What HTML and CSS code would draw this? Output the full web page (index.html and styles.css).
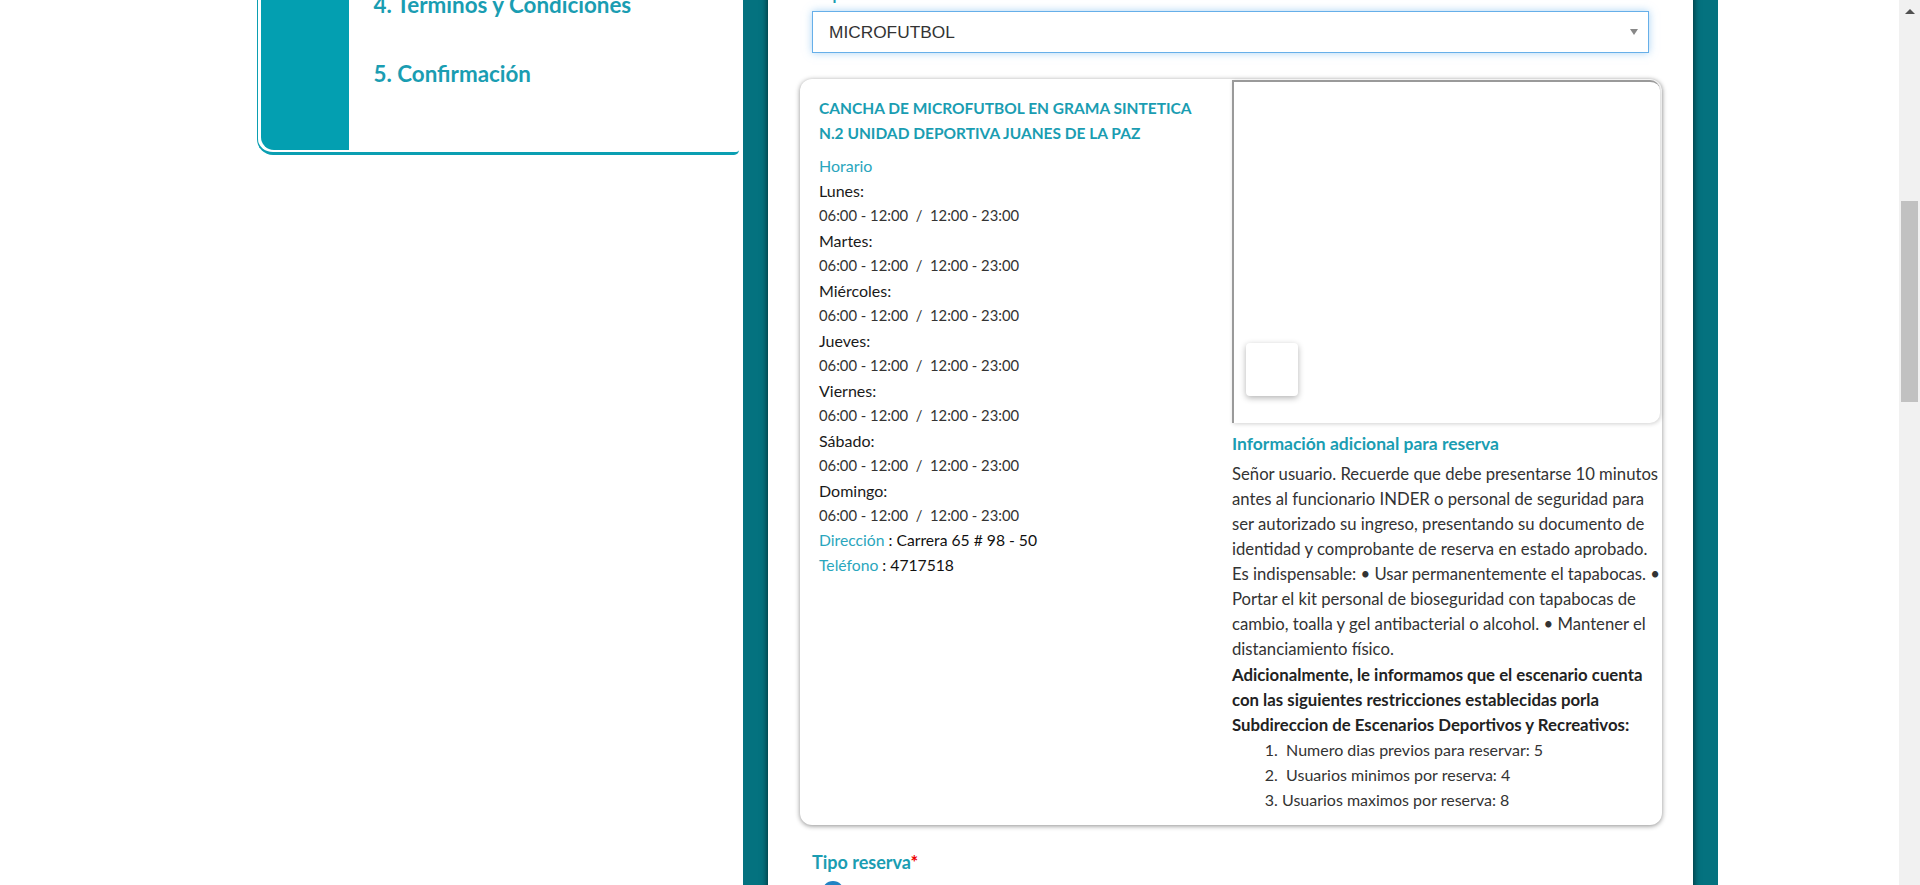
FILE: index.html
```html
<!DOCTYPE html>
<html lang="es">
<head>
<meta charset="utf-8">
<title>Reserva de escenarios</title>
<link rel="stylesheet" href="styles.css">
</head>
<body>
<div class="viewport">
  <div class="page">
    <div class="layout">
      <aside class="steps">
        <div class="steps-rail"></div>
        <ol class="steps-list">
          <li>4. Términos y Condiciones</li>
          <li>5. Confirmación</li>
        </ol>
      </aside>
      <main class="frame">
        <div class="panel">
          <div class="field">
            <label class="field-label">Deporte<span class="req">*</span></label>
            <div class="select">
              <span class="select-value">MICROFUTBOL</span>
              <span class="select-caret"></span>
            </div>
          </div>

          <section class="venue">
            <div class="venue-info">
              <h2 class="venue-title">CANCHA DE MICROFUTBOL EN GRAMA SINTETICA N.2 UNIDAD DEPORTIVA JUANES DE LA PAZ</h2>
              <div class="label">Horario</div>
              <div class="day">Lunes:</div>
              <div class="hours">06:00 - 12:00 &nbsp;/&nbsp; 12:00 - 23:00</div>
              <div class="day">Martes:</div>
              <div class="hours">06:00 - 12:00 &nbsp;/&nbsp; 12:00 - 23:00</div>
              <div class="day">Miércoles:</div>
              <div class="hours">06:00 - 12:00 &nbsp;/&nbsp; 12:00 - 23:00</div>
              <div class="day">Jueves:</div>
              <div class="hours">06:00 - 12:00 &nbsp;/&nbsp; 12:00 - 23:00</div>
              <div class="day">Viernes:</div>
              <div class="hours">06:00 - 12:00 &nbsp;/&nbsp; 12:00 - 23:00</div>
              <div class="day">Sábado:</div>
              <div class="hours">06:00 - 12:00 &nbsp;/&nbsp; 12:00 - 23:00</div>
              <div class="day">Domingo:</div>
              <div class="hours">06:00 - 12:00 &nbsp;/&nbsp; 12:00 - 23:00</div>
              <div class="kv"><span class="label">Dirección</span> : Carrera 65 # 98 - 50</div>
              <div class="kv"><span class="label">Teléfono</span> : 4717518</div>
            </div>

            <div class="venue-side">
              <div class="map">
                <div class="map-control"></div>
              </div>
              <h3 class="extra-title">Información adicional para reserva</h3>
              <p class="extra-text">Señor usuario. Recuerde que debe presentarse 10 minutos antes al funcionario INDER o personal de seguridad para ser autorizado su ingreso, presentando su documento de identidad y comprobante de reserva en estado aprobado. Es indispensable: • Usar permanentemente el tapabocas. • Portar el kit personal de bioseguridad con tapabocas de cambio, toalla y gel antibacterial o alcohol. • Mantener el distanciamiento físico.</p>
              <p class="extra-strong">Adicionalmente, le informamos que el escenario cuenta con las siguientes restricciones establecidas porla Subdireccion de Escenarios Deportivos y Recreativos:</p>
              <ol class="rules">
                <li>&nbsp;Numero dias previos para reservar: 5</li>
                <li>&nbsp;Usuarios minimos por reserva: 4</li>
                <li>Usuarios maximos por reserva: 8</li>
              </ol>
            </div>
          </section>

          <div class="field">
            <label class="field-label field-label-lg">Tipo reserva<span class="req">*</span></label>
            <div class="radio-row"><span class="radio"></span></div>
          </div>
        </div>
      </main>
    </div>
  </div>
  <div class="scrollbar">
    <div class="scroll-arrow"></div>
    <div class="scroll-thumb"></div>
  </div>
</div>
</body>
</html>
```

FILE: styles.css
```css
* { box-sizing: border-box; }

html, body {
  margin: 0;
  height: 100%;
  overflow: hidden;
  background: #fff;
}

body {
  font-family: "Lato", "Open Sans", sans-serif;
  font-size: 16px;
  color: #333;
}

.viewport {
  display: flex;
  height: 885px;
}

.page {
  flex: 1;
  overflow: hidden;
}

.layout {
  display: flex;
  align-items: flex-start;
  gap: 4px;
  margin-top: -40px;
  padding-left: 257px;
}

/* ---------- steps sidebar ---------- */
.steps {
  width: 482px;
  display: flex;
  border-left: 1.5px solid #0b9fb2;
  border-bottom: 3px solid #0b9fb2;
  border-bottom-left-radius: 16px;
  border-bottom-right-radius: 5px;
  padding: 0 0 2px 2.5px;
}

.steps-rail {
  width: 88px;
  flex: none;
  background: #039fb1;
  border-bottom-left-radius: 13px;
}

.steps-list {
  list-style: none;
  margin: 0;
  padding: 9.5px 0 42px 25px;
}

.steps-list li {
  height: 69px;
  line-height: 69px;
  font-size: 22.4px;
  font-weight: 700;
  color: #1a9db2;
  white-space: nowrap;
}

/* ---------- main frame ---------- */
.frame {
  width: 975px;
  flex: none;
  background: #04727f;
  padding: 0 25px;
}

.panel {
  background: #fff;
  box-shadow: 0 0 7px rgba(0, 0, 0, 0.7);
  padding-top: 21px;
  padding-bottom: 40px;
  min-height: 1200px;
}

.field {
  margin: 0 44px;
}

.field-label {
  display: block;
  line-height: 25px;
  font-weight: 700;
  color: #1a9db2;
}

.field-label-lg {
  font-size: 18px;
}

.req { color: #e00; }

.select {
  margin-top: 5px;
  height: 42px;
  border: 1px solid #66afe9;
  box-shadow: 0 0 8px rgba(102, 175, 233, 0.55);
  display: flex;
  align-items: center;
  justify-content: space-between;
  padding: 0 10px 0 16px;
  background: #fff;
}

.select-value {
  font-family: "Liberation Sans", Arial, sans-serif;
  font-size: 17.3px;
  color: #333;
}

.select-caret {
  width: 0;
  height: 0;
  border-left: 4px solid transparent;
  border-right: 4px solid transparent;
  border-top: 6px solid #888;
}

/* ---------- venue card ---------- */
.venue {
  margin: 26px 31px 0 32px;
  border-radius: 12px;
  box-shadow: 0 1px 5px rgba(0, 0, 0, 0.45);
  display: grid;
  grid-template-columns: 432px 1fr;
  padding: 1px 2px 13px 0;
  line-height: 25px;
}

.venue-info {
  padding: 16px 19px 0 19px;
}

.venue-title {
  margin: 0 0 7px;
  font-size: 15.5px;
  line-height: 25px;
  font-weight: 700;
  color: #1a9db2;
}

.label {
  color: #2aa6bd;
}

.day { color: #1a1a1a; }
.hours { color: #333; font-size: 14.8px; }
.kv { color: #111; font-size: 15.7px; }

.venue-side {
  min-width: 0;
}

.map {
  position: relative;
  height: 343px;
  border-left: 2px solid #9a9a9a;
  border-top: 2px solid #9a9a9a;
  border-radius: 0 10px 10px 0;
  box-shadow: 1px 1px 4px rgba(0, 0, 0, 0.18);
  background: #fff;
}

.map-control {
  position: absolute;
  left: 12px;
  bottom: 27px;
  width: 52px;
  height: 53px;
  background: #fff;
  border-radius: 4px;
  box-shadow: 0 2px 6px rgba(0, 0, 0, 0.3);
}

.extra-title {
  margin: 8px 0 0;
  font-size: 17.5px;
  line-height: 25px;
  font-weight: 700;
  color: #1a9db2;
}

.extra-text {
  margin: 6px 0 0;
  font-size: 16.7px;
  color: #333;
}

.extra-strong {
  margin: 0;
  font-size: 16.8px;
  font-weight: 700;
  color: #222;
}

.rules {
  margin: 0;
  padding-left: 50px;
  color: #333;
}

/* ---------- tipo reserva ---------- */
.venue + .field {
  margin-top: 25px;
}

.radio-row {
  padding: 6px 0 0 10px;
}

.radio {
  display: block;
  width: 22px;
  height: 22px;
  border-radius: 50%;
  background: #2283c3;
}

/* ---------- scrollbar ---------- */
.scrollbar {
  width: 21px;
  flex: none;
  background: #f1f1f1;
  display: flex;
  flex-direction: column;
  align-items: center;
}

.scroll-arrow {
  margin-top: 9px;
  width: 0;
  height: 0;
  border-left: 5px solid transparent;
  border-right: 5px solid transparent;
  border-bottom: 5px solid #505050;
}

.scroll-thumb {
  margin-top: 187px;
  width: 17px;
  height: 201px;
  background: #c1c1c1;
}
```
